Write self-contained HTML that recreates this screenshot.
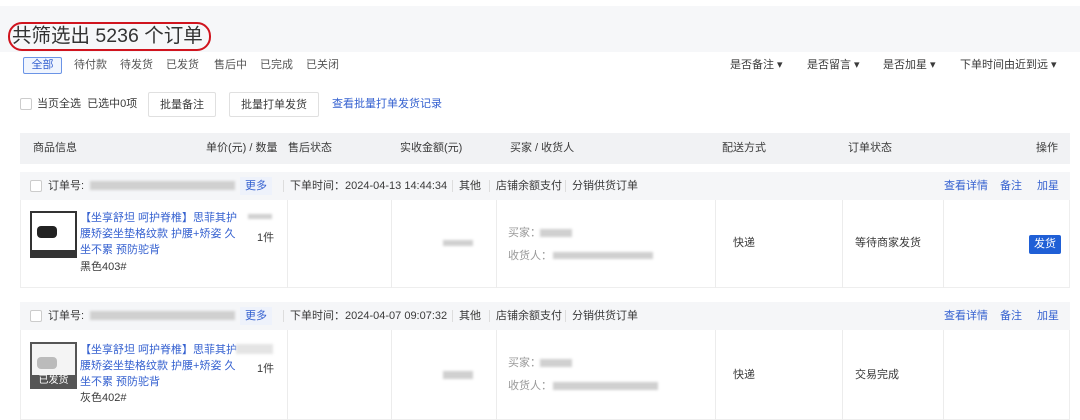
<!DOCTYPE html>
<html><head><meta charset="utf-8"><style>
*{margin:0;padding:0;box-sizing:border-box}
body{width:1080px;height:414px;overflow:hidden;background:#fff;font-family:"Liberation Sans","Noto Sans CJK SC",sans-serif;font-size:11px;color:#3a3a3a;position:relative}
.a{position:absolute;white-space:nowrap}
.blue{color:#3561d0}
.gray{color:#555}
.cb{position:absolute;width:12px;height:12px;border:1px solid #ccc;border-radius:2px;background:#fff}
.btn{position:absolute;border:1px solid #e0e0e0;border-radius:2px;background:#fff;text-align:center;line-height:24px;font-size:11px}
.blur{position:absolute;background:#d0d0d0;filter:blur(1.2px)}
.vl{position:absolute;width:1px;background:#ececec}
.sep{position:absolute;width:1px;height:12px;background:#ddd}
</style></head><body>
<div class="a" style="left:0;top:6px;width:1080px;height:46px;background:#f6f7f9"></div>
<div class="a" style="left:8px;top:22px;width:203px;height:29px;border:2.5px solid #d0141e;border-radius:14px"></div>
<div class="a" style="left:12px;top:24px;font-size:19.5px;color:#333;line-height:24px">共筛选出 5236 个订单</div>

<div class="a blue" style="left:23px;top:57px;width:39px;height:17px;border:1px solid #6b94e6;background:#f0f5fe;border-radius:2px;text-align:center;line-height:15px">全部</div>
<div class="a gray" style="left:74px;top:58px;line-height:15px">待付款</div>
<div class="a gray" style="left:120px;top:58px;line-height:15px">待发货</div>
<div class="a gray" style="left:166px;top:58px;line-height:15px">已发货</div>
<div class="a gray" style="left:214px;top:58px;line-height:15px">售后中</div>
<div class="a gray" style="left:260px;top:58px;line-height:15px">已完成</div>
<div class="a gray" style="left:306px;top:58px;line-height:15px">已关闭</div>
<div class="a" style="left:730px;top:58px;line-height:15px">是否备注 ▾</div>
<div class="a" style="left:807px;top:58px;line-height:15px">是否留言 ▾</div>
<div class="a" style="left:883px;top:58px;line-height:15px">是否加星 ▾</div>
<div class="a" style="left:960px;top:58px;line-height:15px">下单时间由近到远 ▾</div>

<div class="cb" style="left:20px;top:98px"></div>
<div class="a" style="left:37px;top:97px;line-height:14px">当页全选&nbsp; 已选中0项</div>
<div class="btn" style="left:148px;top:92px;width:68px;height:25px">批量备注</div>
<div class="btn" style="left:229px;top:92px;width:90px;height:25px">批量打单发货</div>
<div class="a blue" style="left:332px;top:97px;line-height:14px">查看批量打单发货记录</div>

<div class="a" style="left:20px;top:133px;width:1050px;height:31px;background:#f1f2f4"></div>
<div class="a" style="left:33px;top:141px;line-height:14px">商品信息</div>
<div class="a" style="left:206px;top:141px;line-height:14px">单价(元) / 数量</div>
<div class="a" style="left:288px;top:141px;line-height:14px">售后状态</div>
<div class="a" style="left:400px;top:141px;line-height:14px">实收金额(元)</div>
<div class="a" style="left:510px;top:141px;line-height:14px">买家 / 收货人</div>
<div class="a" style="left:722px;top:141px;line-height:14px">配送方式</div>
<div class="a" style="left:848px;top:141px;line-height:14px">订单状态</div>
<div class="a" style="left:1036px;top:141px;line-height:14px">操作</div>

<!-- order 1 -->
<div class="a" style="left:20px;top:172px;width:1050px;height:28px;background:#f5f6f8"></div>
<div class="cb" style="left:30px;top:180px"></div>
<div class="a" style="left:48px;top:179px;line-height:14px">订单号:</div>
<div class="blur" style="left:90px;top:181px;width:145px;height:9px"></div>
<div class="a blue" style="left:240px;top:177px;width:32px;height:18px;background:#eef2fb;text-align:center;line-height:18px">更多</div>
<div class="sep" style="left:283px;top:180px"></div>
<div class="a" style="left:290px;top:179px;line-height:14px">下单时间：2024-04-13 14:44:34</div>
<div class="sep" style="left:452px;top:180px"></div>
<div class="a" style="left:459px;top:179px;line-height:14px">其他</div>
<div class="sep" style="left:489px;top:180px"></div>
<div class="a" style="left:496px;top:179px;line-height:14px">店铺余额支付</div>
<div class="sep" style="left:565px;top:180px"></div>
<div class="a" style="left:572px;top:179px;line-height:14px">分销供货订单</div>
<div class="a blue" style="left:944px;top:179px;line-height:14px">查看详情</div>
<div class="a blue" style="left:1000px;top:179px;line-height:14px">备注</div>
<div class="a blue" style="left:1037px;top:179px;line-height:14px">加星</div>
<div class="a" style="left:20px;top:200px;width:1050px;height:88px;border:1px solid #eee;border-top:none"></div>
<div class="vl" style="left:287px;top:200px;height:88px"></div>
<div class="vl" style="left:391px;top:200px;height:88px"></div>
<div class="vl" style="left:496px;top:200px;height:88px"></div>
<div class="vl" style="left:715px;top:200px;height:88px"></div>
<div class="vl" style="left:842px;top:200px;height:88px"></div>
<div class="vl" style="left:943px;top:200px;height:88px"></div>
<div class="a" style="left:30px;top:211px;width:47px;height:47px;border:2px solid #333;background:#fff">
<div class="a" style="left:5px;top:13px;width:20px;height:12px;background:#222;border-radius:4px"></div>
<div class="a" style="left:0;top:37px;width:43px;height:6px;background:#333"></div></div>
<div class="a blue" style="left:80px;top:210px;line-height:16px;white-space:normal;width:170px">【坐享舒坦 呵护脊椎】思菲其护<br>腰矫姿坐垫格纹款 护腰+矫姿 久<br>坐不累 预防驼背</div>
<div class="blur" style="left:248px;top:214px;width:24px;height:5px"></div>
<div class="a" style="left:80px;top:259px;line-height:16px">黑色403#</div>
<div class="a" style="left:257px;top:230px;line-height:16px">1件</div>
<div class="blur" style="left:443px;top:240px;width:30px;height:6px"></div>
<div class="a" style="left:508px;top:226px;color:#999;line-height:14px">买家：</div>
<div class="blur" style="left:540px;top:229px;width:32px;height:8px"></div>
<div class="a" style="left:508px;top:249px;color:#999;line-height:14px">收货人：</div>
<div class="blur" style="left:553px;top:252px;width:100px;height:7px"></div>
<div class="a" style="left:733px;top:236px;line-height:14px">快递</div>
<div class="a" style="left:855px;top:236px;line-height:14px">等待商家发货</div>
<div class="a" style="left:1029px;top:235px;width:32px;height:19px;background:#1f5fd6;color:#fff;border-radius:2px;text-align:center;line-height:19px">发货</div>

<!-- order 2 -->
<div class="a" style="left:20px;top:302px;width:1050px;height:28px;background:#f5f6f8"></div>
<div class="cb" style="left:30px;top:310px"></div>
<div class="a" style="left:48px;top:309px;line-height:14px">订单号:</div>
<div class="blur" style="left:90px;top:311px;width:145px;height:9px"></div>
<div class="a blue" style="left:240px;top:307px;width:32px;height:18px;background:#eef2fb;text-align:center;line-height:18px">更多</div>
<div class="sep" style="left:283px;top:310px"></div>
<div class="a" style="left:290px;top:309px;line-height:14px">下单时间：2024-04-07 09:07:32</div>
<div class="sep" style="left:452px;top:310px"></div>
<div class="a" style="left:459px;top:309px;line-height:14px">其他</div>
<div class="sep" style="left:489px;top:310px"></div>
<div class="a" style="left:496px;top:309px;line-height:14px">店铺余额支付</div>
<div class="sep" style="left:565px;top:310px"></div>
<div class="a" style="left:572px;top:309px;line-height:14px">分销供货订单</div>
<div class="a blue" style="left:944px;top:309px;line-height:14px">查看详情</div>
<div class="a blue" style="left:1000px;top:309px;line-height:14px">备注</div>
<div class="a blue" style="left:1037px;top:309px;line-height:14px">加星</div>
<div class="a" style="left:20px;top:330px;width:1050px;height:90px;border:1px solid #eee;border-top:none"></div>
<div class="vl" style="left:287px;top:330px;height:90px"></div>
<div class="vl" style="left:391px;top:330px;height:90px"></div>
<div class="vl" style="left:496px;top:330px;height:90px"></div>
<div class="vl" style="left:715px;top:330px;height:90px"></div>
<div class="vl" style="left:842px;top:330px;height:90px"></div>
<div class="vl" style="left:943px;top:330px;height:90px"></div>
<div class="a" style="left:30px;top:342px;width:47px;height:47px;border:2px solid #555;background:#f4f4f4">
<div class="a" style="left:5px;top:13px;width:20px;height:12px;background:#bbb;border-radius:4px"></div>
<div class="a" style="left:0;top:31px;width:43px;height:12px;background:#555;color:#fff;text-align:center;font-size:10px;line-height:12px">已发货</div></div>
<div class="a blue" style="left:80px;top:342px;line-height:16px;white-space:normal;width:170px">【坐享舒坦 呵护脊椎】思菲其护<br>腰矫姿坐垫格纹款 护腰+矫姿 久<br>坐不累 预防驼背</div>
<div class="blur" style="left:236px;top:344px;width:37px;height:10px;background:#e4e4e4"></div>
<div class="a" style="left:80px;top:390px;line-height:16px">灰色402#</div>
<div class="a" style="left:257px;top:361px;line-height:16px">1件</div>
<div class="blur" style="left:443px;top:371px;width:30px;height:8px"></div>
<div class="a" style="left:508px;top:356px;color:#999;line-height:14px">买家：</div>
<div class="blur" style="left:540px;top:359px;width:32px;height:8px"></div>
<div class="a" style="left:508px;top:379px;color:#999;line-height:14px">收货人：</div>
<div class="blur" style="left:553px;top:382px;width:105px;height:8px"></div>
<div class="a" style="left:733px;top:368px;line-height:14px">快递</div>
<div class="a" style="left:855px;top:368px;line-height:14px">交易完成</div>
</body></html>
